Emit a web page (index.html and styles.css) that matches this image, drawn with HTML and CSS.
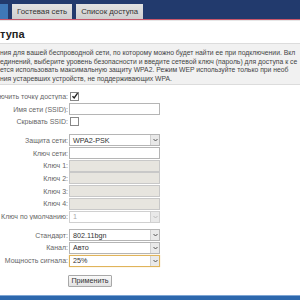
FILE: index.html
```html
<!DOCTYPE html>
<html lang="ru">
<head>
	<meta charset="UTF-8">
	<title>Точка доступа</title>
	<link rel="stylesheet" href="styles.css">
</head>
<body>
<div class="top">
	<ul class="tabs">
		<li class="tab on"></li>
		<li class="tab">Гостевая сеть</li>
		<li class="tab">Список доступа</li>
	</ul>
</div>
<h2 class="title">тупа</h2>
<div class="desc">
	<p>ния для вашей беспроводной сети, по которому можно будет найти ее при подключении. Вкл</p>
	<p>единений, выберите уровень безопасности и введите сетевой ключ (пароль) для доступа к се</p>
	<p>ется использовать максимальную защиту WPA2. Режим WEP используйте только при необ</p>
	<p>ния устаревших устройств, не поддерживающих WPA.</p>
</div>
<div class="form">
	<div class="row">
		<label><span>Включить точку доступа:</span></label>
		<span class="check"><svg width="8" height="8" viewBox="0 0 8 8"><path d="M1.5 4.2 L3.2 6 L6.6 1.2" fill="none" stroke="#222" stroke-width="1.4"/></svg></span>
	</div>
	<div class="row">
		<label><span>Имя сети (SSID):</span></label>
		<span class="field"></span>
	</div>
	<div class="row">
		<label><span>Скрывать SSID:</span></label>
		<span class="check"></span>
	</div>
	<div class="gap"></div>
	<div class="row">
		<label><span>Защита сети:</span></label>
		<span class="field select">WPA2-PSK<i class="arr"><svg width="5" height="4" viewBox="0 0 5 4"><path d="M0.5 1 L2.5 3 L4.5 1" fill="none" stroke="#555" stroke-width="1"/></svg></i></span>
	</div>
	<div class="row">
		<label><span>Ключ сети:</span></label>
		<span class="field"></span>
	</div>
	<div class="row">
		<label><span>Ключ 1:</span></label>
		<span class="field off"></span>
	</div>
	<div class="row">
		<label><span>Ключ 2:</span></label>
		<span class="field off"></span>
	</div>
	<div class="row">
		<label><span>Ключ 3:</span></label>
		<span class="field off"></span>
	</div>
	<div class="row">
		<label><span>Ключ 4:</span></label>
		<span class="field off"></span>
	</div>
	<div class="row">
		<label><span>Ключ по умолчанию:</span></label>
		<span class="field select dis">1<i class="arr"><svg width="5" height="4" viewBox="0 0 5 4"><path d="M0.5 1 L2.5 3 L4.5 1" fill="none" stroke="#bbb" stroke-width="1"/></svg></i></span>
	</div>
	<div class="gap"></div>
	<div class="row">
		<label><span>Стандарт:</span></label>
		<span class="field select">802.11bgn<i class="arr"><svg width="5" height="4" viewBox="0 0 5 4"><path d="M0.5 1 L2.5 3 L4.5 1" fill="none" stroke="#555" stroke-width="1"/></svg></i></span>
	</div>
	<div class="row">
		<label><span>Канал:</span></label>
		<span class="field select">Авто<i class="arr"><svg width="5" height="4" viewBox="0 0 5 4"><path d="M0.5 1 L2.5 3 L4.5 1" fill="none" stroke="#555" stroke-width="1"/></svg></i></span>
	</div>
	<div class="row">
		<label><span>Мощность сигнала:</span></label>
		<span class="field select focus">25%<i class="arr"><svg width="5" height="4" viewBox="0 0 5 4"><path d="M0.5 1 L2.5 3 L4.5 1" fill="none" stroke="#555" stroke-width="1"/></svg></i></span>
	</div>
	<div class="actions">
		<button class="btn">Применить</button>
	</div>
</div>
<div class="bottom"></div>
</body>
</html>
```
FILE: styles.css
```css
body{margin:0;font-family:"Liberation Sans",Arial,sans-serif;color:#444;background:#fff;overflow:hidden;}
ul,li,p,h2{margin:0;padding:0;list-style:none;}

/* верхняя панель с вкладками */
.top{height:19px;background:#223a6d;border-bottom:1px solid #c9566a;box-shadow:0 1px 0 #e6e6e6;}
.tabs{display:flex;align-items:flex-end;height:19px;gap:4px;}
.tab{height:15px;line-height:15px;padding:0 5px;font-size:7.8px;color:#333;background:linear-gradient(#e2e2e2,#cfcfcf);}
.tab.on{width:0;padding:0 4px;background:#3f78b8;}
.tab+.tab{min-width:43px;text-align:center;}

.title{font-size:11px;font-weight:bold;color:#222;margin:8px 0 0 0;line-height:12px;height:15px;}

.desc{background:#f1f1f1;border:1px solid #dcdcdc;border-left:0;border-right:0;padding:5px 0 3px 0;height:32px;font-size:6.8px;line-height:8.5px;color:#444;white-space:nowrap;overflow:hidden;}

/* форма */
.form{padding-top:5px;font-size:7px;}
.row{display:grid;grid-template-columns:68px 92px;column-gap:1px;align-items:center;height:12.7px;}
.row label{display:flex;justify-content:flex-end;white-space:nowrap;overflow:hidden;color:#666;}
.gap{height:6px;}
.check{width:7px;height:7px;border:1px solid #888;background:#fff;display:flex;align-items:center;justify-content:center;margin-left:1px;}
.check svg{flex:none;}
.field{box-sizing:border-box;height:12px;width:91px;border:1px solid #b5b5b5;background:#fff;display:flex;align-items:center;padding-left:3px;color:#333;font-size:7.2px;}
.field.off{background:#e7e5df;border-color:#c8c8c8;}
.field.dis{color:#aaa;border-color:#d0d0d0;}
.field.focus{border-color:#e0b45a;box-shadow:0 0 1px #f0d090;}
.arr{margin-left:auto;width:8px;height:10px;background:#e9e9e9;border-left:1px solid #d0d0d0;display:flex;align-items:center;justify-content:center;}
.actions{padding:8px 0 0 68px;}
.btn{font-family:inherit;font-size:7.2px;color:#333;height:12px;width:44px;padding:0;border:1px solid #a8a8a8;background:linear-gradient(#fafafa,#e2e2e2);border-radius:1px;}

.bottom{position:absolute;left:0;right:0;top:295px;height:5px;background:#2d68ad;border-top:1px solid #7fa6d4;}
```
